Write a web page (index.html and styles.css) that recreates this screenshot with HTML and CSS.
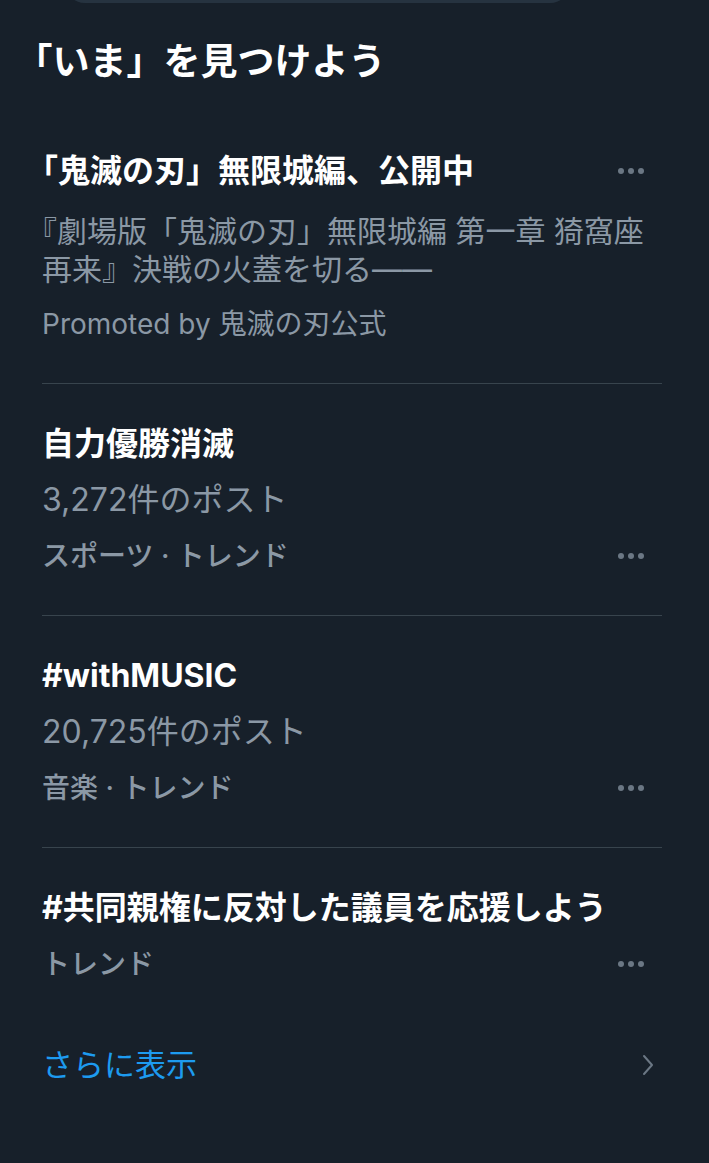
FILE: index.html
```html
<!DOCTYPE html>
<html lang="ja">
    <head>
        <meta charset="UTF-8" />
        <meta name="viewport" content="width=device-width, initial-scale=1.0" />
        <title>トレンド</title>
        <link rel="stylesheet" href="styles.css">
    </head>
    <body>
        <div class="explore">
            <div class="search-edge"></div>
            <h2 class="section-title">「いま」を見つけよう</h2>

            <ul class="trends">
                <li class="trend">
                    <div class="trend-row">
                        <span class="trend-name">「鬼滅の刃」無限城編、公開中</span>
                        <span class="more"><i></i><i></i><i></i></span>
                    </div>
                    <p class="trend-desc">『劇場版「鬼滅の刃」無限城編 第一章 猗窩座再来』決戦の火蓋を切る——</p>
                    <p class="trend-promo">Promoted by 鬼滅の刃公式</p>
                </li>
                <li class="trend">
                    <div class="trend-row">
                        <span class="trend-name">自力優勝消滅</span>
                    </div>
                    <p class="trend-count">3,272件のポスト</p>
                    <div class="trend-row">
                        <span class="trend-cat">スポーツ · トレンド</span>
                        <span class="more"><i></i><i></i><i></i></span>
                    </div>
                </li>
                <li class="trend">
                    <div class="trend-row">
                        <span class="trend-name">#withMUSIC</span>
                    </div>
                    <p class="trend-count">20,725件のポスト</p>
                    <div class="trend-row">
                        <span class="trend-cat">音楽 · トレンド</span>
                        <span class="more"><i></i><i></i><i></i></span>
                    </div>
                </li>
                <li class="trend">
                    <div class="trend-row">
                        <span class="trend-name">#共同親権に反対した議員を応援しよう</span>
                    </div>
                    <div class="trend-row">
                        <span class="trend-cat">トレンド</span>
                        <span class="more"><i></i><i></i><i></i></span>
                    </div>
                </li>
            </ul>

            <a class="show-more" href="#">
                <span>さらに表示</span>
                <svg width="12" height="22" viewBox="0 0 12 22">
                    <path d="M2 2 L10 11 L2 20" fill="none" stroke="#6b7784" stroke-width="2" stroke-linecap="round" stroke-linejoin="round" />
                </svg>
            </a>
        </div>
    </body>
</html>
```

FILE: styles.css
```css
* {
    margin: 0;
    padding: 0;
    box-sizing: border-box;
}
body {
    background-color: #17202a;
    color: #ffffff;
    font-family: Inter, "Noto Sans CJK JP", sans-serif;
    text-spacing-trim: trim-start;
}
.explore {
    padding: 0 47px 0 42px;
}
.search-edge {
    height: 40px;
    margin-top: -37px;
    margin-left: 23px;
    width: 505px;
    border-radius: 20px;
    background-color: #263340;
}
.section-title {
    font-size: 37px;
    font-weight: 700;
    line-height: 44px;
    padding: 37px 0 27px;
    margin-left: -8px;
}
.trends {
    list-style: none;
}
.trend {
    display: flex;
    flex-direction: column;
    gap: 12px;
    padding: 38px 0 37px;
    border-bottom: 1px solid #38444d;
}
.trend:last-child {
    border-bottom: none;
}
.trend-row {
    display: flex;
    align-items: center;
    justify-content: space-between;
    line-height: 44px;
}
.trend-name {
    font-size: 32px;
    font-weight: 700;
    white-space: nowrap;
}
.trend-desc {
    margin-top: 7px;
    font-size: 30px;
    line-height: 38px;
    color: #8b98a5;
}
.trend-promo {
    margin-top: 2px;
    font-size: 28px;
    line-height: 44px;
    color: #8b98a5;
}
.trend-count {
    font-size: 32px;
    line-height: 44px;
    color: #8b98a5;
}
.trend-cat {
    font-size: 28px;
    font-weight: 500;
    color: #8b98a5;
}
.more {
    display: flex;
    gap: 4px;
    margin-right: 18px;
}
.more i {
    width: 6px;
    height: 6px;
    border-radius: 50%;
    background-color: #6b7784;
}
.show-more {
    display: flex;
    align-items: center;
    justify-content: space-between;
    padding-top: 20px;
    line-height: 44px;
    font-size: 31px;
    color: #1d9bf0;
    text-decoration: none;
}
.show-more svg {
    margin-right: 8px;
}
```
